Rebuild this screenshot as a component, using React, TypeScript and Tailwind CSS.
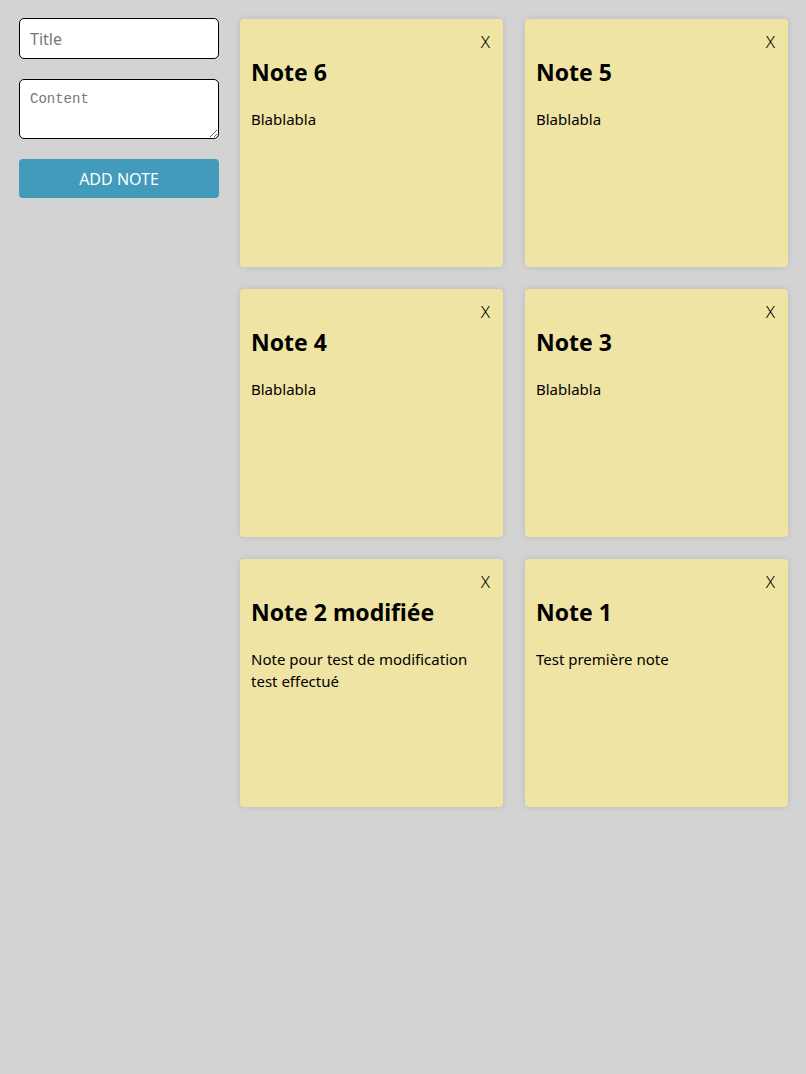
import React from 'react';

interface Note {
  id: number;
  title: string;
  content: string;
}

const notes: Note[] = [
  { id: 6, title: 'Note 6', content: 'Blablabla' },
  { id: 5, title: 'Note 5', content: 'Blablabla' },
  { id: 4, title: 'Note 4', content: 'Blablabla' },
  { id: 3, title: 'Note 3', content: 'Blablabla' },
  { id: 2, title: 'Note 2 modifiée', content: 'Note pour test de modification test effectué' },
  { id: 1, title: 'Note 1', content: 'Test première note' },
];

const NoteCard: React.FC<{ note: Note }> = ({ note }) => (
  <div className="w-[263px] h-[248px] rounded-[4px] bg-[#f0e4a4] shadow-[0_0_6px_rgba(0,0,0,0.12)] px-[11px] pt-[12px] flex flex-col">
    <div className="flex justify-end pr-[2px]">
      <button className="text-[17px] leading-[22px] text-black font-light">X</button>
    </div>
    <h2 className="mt-[3px] text-[23px] leading-[32px] font-bold text-black">{note.title}</h2>
    <p className="mt-[20px] text-[15px] leading-[22px] text-black">{note.content}</p>
  </div>
);

export default function App() {
  return (
    <div className="min-h-[1074px] bg-[#d3d3d3] font-['Noto_Sans',sans-serif] flex gap-[21px] pl-[19px] pt-[18px]">
      <div className="w-[200px] flex flex-col">
        <input
          placeholder="Title"
          className="h-[41px] rounded-[5px] border border-black bg-white px-[10px] text-[16px] placeholder:text-[#777]"
        />
        <textarea
          placeholder="Content"
          className="mt-[20px] h-[60px] rounded-[5px] border border-black bg-white px-[10px] py-[10px] text-[14px] leading-[18px] font-['Liberation_Mono',monospace] placeholder:text-[#777] resize-y"
        />
        <button className="mt-[20px] h-[39px] rounded-[4px] bg-[#429bba] text-white text-[16px]">
          ADD NOTE
        </button>
      </div>
      <div className="grid grid-cols-[263px_263px] gap-x-[22px] gap-y-[22px] pt-[1px] content-start">
        {notes.map((n) => (
          <NoteCard key={n.id} note={n} />
        ))}
      </div>
    </div>
  );
}
